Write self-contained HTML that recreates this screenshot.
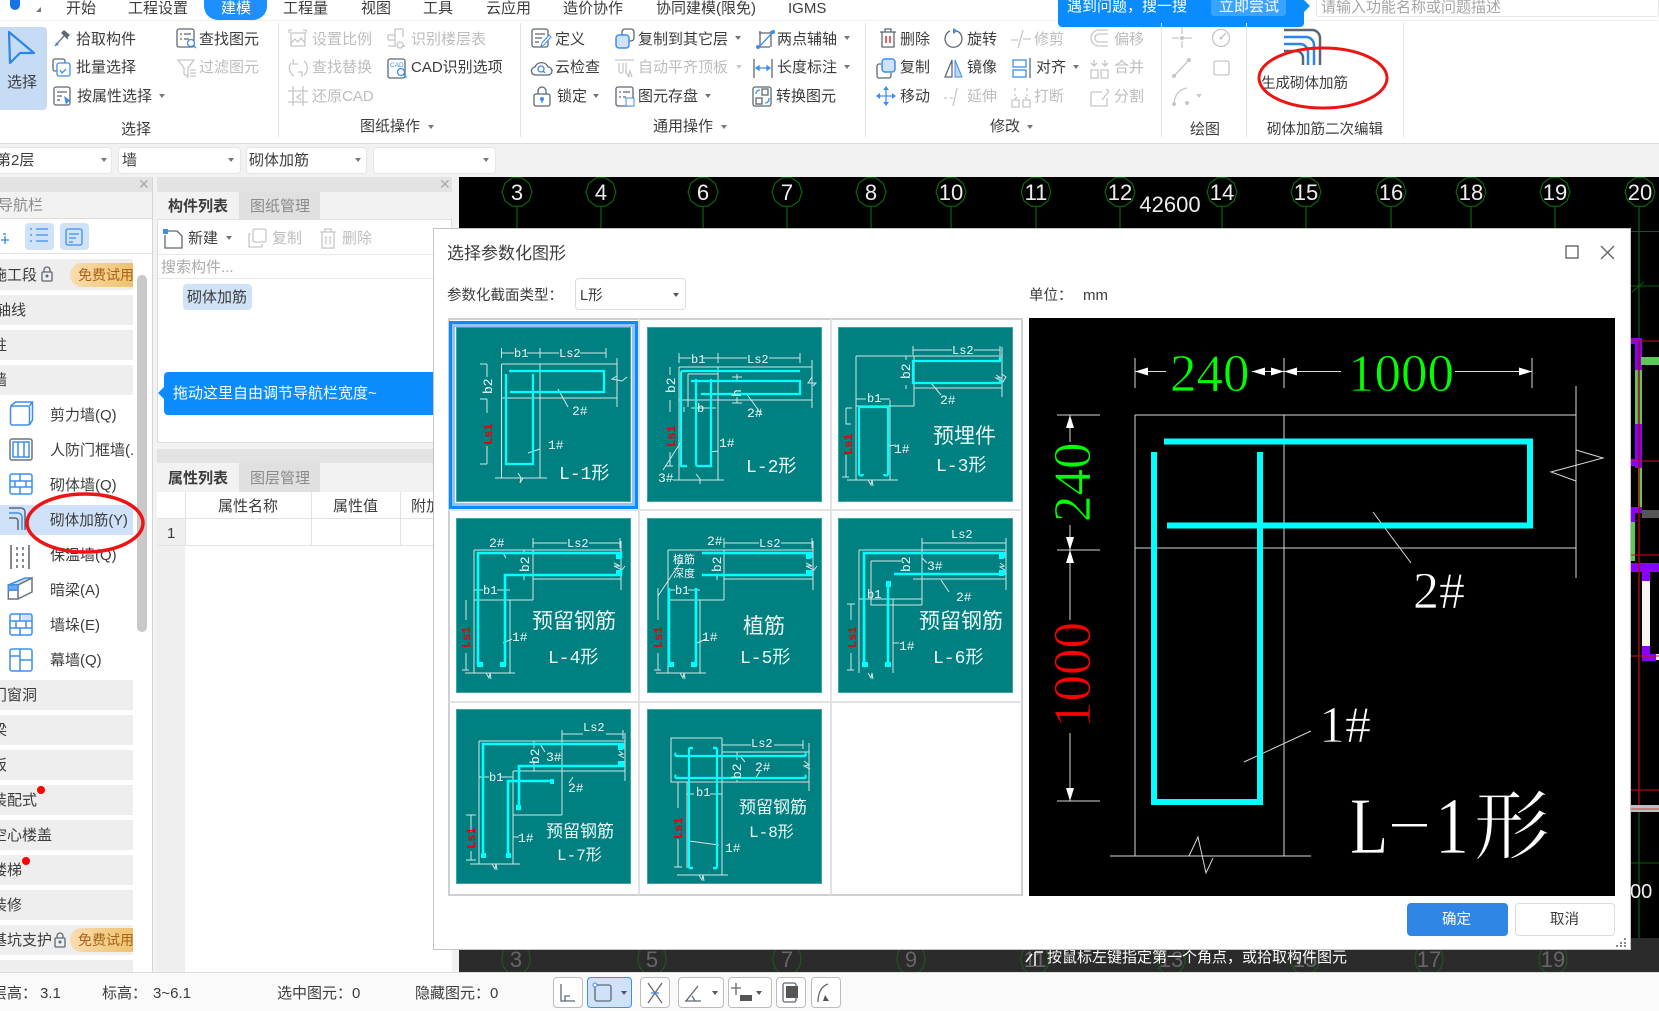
<!DOCTYPE html>
<html lang="zh"><head><meta charset="utf-8"><title>选择参数化图形</title>
<style>
html,body{margin:0;padding:0;background:#fff}
#p{position:relative;width:1659px;height:1011px;overflow:hidden;font-family:"Liberation Sans","Noto Sans CJK SC",sans-serif;font-size:15px;color:#3c3c3c;background:#f2f2f2}
.t{position:absolute;white-space:nowrap;line-height:20px;transform:translateY(calc(-50% + 1px))}
.d{color:#bdbdbd}
.b{position:absolute}
.sel{position:absolute;background:#fff;border:1px solid #e6e6e6;border-radius:4px;box-sizing:border-box;height:27px;top:147px}
.car{position:absolute;width:0;height:0;border-left:3.5px solid transparent;border-right:3.5px solid transparent;border-top:4px solid #777}
.row{position:absolute;left:0;width:133px;height:30px;background:#eeeeee}
.badge{position:absolute;left:70px;width:63px;height:24px;border-radius:12px 0 0 12px;background:linear-gradient(90deg,#f9dcb0,#eec26c);color:#a8621c;font-size:14px;line-height:25px;text-indent:8px;white-space:nowrap;overflow:hidden}
svg{position:absolute;overflow:visible}
svg text{font-family:"Liberation Mono","Noto Sans CJK SC",monospace}
.th{background:#008080;width:175px;height:175px;outline:1px solid #3aa5a5;outline-offset:-1px}
.th .w{fill:none;stroke:#d5e6e6;stroke-width:1}
.th .c{fill:none;stroke:#0ff;stroke-width:2.2}
.th text{fill:#eef7f7;font-size:12px}
.th .r{fill:#e80000;font-size:12px;font-weight:bold}
.th .n{font-size:13px}
.th .h{font-size:21px}
.th .m{font-size:18px}
.th .s{font-size:17px}
.g{fill:none;stroke:#5f6873;stroke-width:1.3}
.u{fill:none;stroke:#3d8ef0;stroke-width:1.3}
.x{fill:none;stroke:#c6c6c6;stroke-width:1.3}
.btn{position:absolute;top:977px;height:31px;box-sizing:border-box;background:#fff;border:1px solid #bcbcbc;border-radius:4px}
</style></head><body><div id="p">

<!-- top tabs -->
<div class="b" style="left:0;top:0;width:1659px;height:143px;background:#fff;border-bottom:1px solid #dcdcdc;box-sizing:content-box"></div>
<div class="b" style="left:0;top:20px;width:1659px;height:1px;background:#f0f0f0"></div>
<div class="b" style="left:10px;top:0;width:10px;height:10px;border-radius:0 0 6px 6px;background:#1673e6"></div>
<div class="b" style="left:36px;top:7px;width:0;height:0;border-left:5px solid transparent;border-bottom:5px solid #777"></div>
<div class="b" style="left:204px;top:0;width:63px;height:20px;background:#1d8fff;border-radius:0 0 14px 14px"></div>
<span class="t" style="left:66px;top:8px">开始</span>
<span class="t" style="left:128px;top:8px">工程设置</span>
<span class="t" style="left:221px;top:8px;color:#fff">建模</span>
<span class="t" style="left:283px;top:8px">工程量</span>
<span class="t" style="left:361px;top:8px">视图</span>
<span class="t" style="left:423px;top:8px">工具</span>
<span class="t" style="left:486px;top:8px">云应用</span>
<span class="t" style="left:563px;top:8px">造价协作</span>
<span class="t" style="left:656px;top:8px">协同建模(限免)</span>
<span class="t" style="left:788px;top:8px">IGMS</span>

<!-- search tip -->
<div class="b" style="left:1058px;top:0;width:246px;height:27px;background:#0a8cff;border-radius:0 0 4px 4px"></div>
<div class="b" style="left:1304px;top:0;width:0;height:0;border-left:6px solid #0a8cff;border-top:6px solid transparent;border-bottom:6px solid transparent"></div>
<span class="t" style="left:1067px;top:6px;color:#fff">遇到问题，搜一搜</span>
<div class="b" style="left:1211px;top:0;width:75px;height:16px;background:#3aa3ff;border-radius:0 0 3px 3px"></div>
<span class="t" style="left:1219px;top:6px;color:#fff">立即尝试</span>
<div class="b" style="left:1316px;top:0;width:343px;height:17px;border:1px solid #e6e6e6;border-top:0;border-radius:0 0 3px 3px;box-sizing:border-box"></div>
<span class="t" style="left:1321px;top:7px;color:#a5a5a5">请输入功能名称或问题描述</span>

<!-- ribbon -->
<div class="b" style="left:0;top:27px;width:47px;height:83px;background:#c5dcf4;border-radius:0 4px 4px 0"></div>
<span class="t" style="left:7px;top:82px">选择</span>
<span class="t" style="left:76px;top:39px">拾取构件</span>
<span class="t" style="left:76px;top:67px">批量选择</span>
<span class="t" style="left:77px;top:96px">按属性选择</span><div class="car" style="left:159px;top:94px"></div>
<span class="t" style="left:199px;top:39px">查找图元</span>
<span class="t d" style="left:199px;top:67px">过滤图元</span>
<span class="t" style="left:121px;top:129px">选择</span>
<span class="t d" style="left:312px;top:39px">设置比例</span>
<span class="t d" style="left:411px;top:39px">识别楼层表</span>
<span class="t d" style="left:312px;top:67px">查找替换</span>
<span class="t" style="left:411px;top:67px">CAD识别选项</span>
<span class="t d" style="left:312px;top:96px">还原CAD</span>
<span class="t" style="left:360px;top:126px">图纸操作</span><div class="car" style="left:428px;top:125px"></div>
<span class="t" style="left:555px;top:39px">定义</span>
<span class="t" style="left:555px;top:67px">云检查</span>
<span class="t" style="left:557px;top:96px">锁定</span><div class="car" style="left:593px;top:94px"></div>
<span class="t" style="left:638px;top:39px">复制到其它层</span><div class="car" style="left:735px;top:36px"></div>
<span class="t d" style="left:638px;top:67px">自动平齐顶板</span><div class="car" style="left:736px;top:65px;opacity:.4"></div>
<span class="t" style="left:638px;top:96px">图元存盘</span><div class="car" style="left:705px;top:94px"></div>
<span class="t" style="left:777px;top:39px">两点辅轴</span><div class="car" style="left:844px;top:36px"></div>
<span class="t" style="left:777px;top:67px">长度标注</span><div class="car" style="left:844px;top:65px"></div>
<span class="t" style="left:776px;top:96px">转换图元</span>
<span class="t" style="left:653px;top:126px">通用操作</span><div class="car" style="left:721px;top:125px"></div>
<span class="t" style="left:900px;top:39px">删除</span>
<span class="t" style="left:967px;top:39px">旋转</span>
<span class="t d" style="left:1034px;top:39px">修剪</span>
<span class="t" style="left:900px;top:67px">复制</span>
<span class="t" style="left:967px;top:67px">镜像</span>
<span class="t" style="left:1036px;top:67px">对齐</span><div class="car" style="left:1073px;top:65px"></div>
<span class="t" style="left:900px;top:96px">移动</span>
<span class="t d" style="left:967px;top:96px">延伸</span>
<span class="t d" style="left:1034px;top:96px">打断</span>
<span class="t" style="left:990px;top:126px">修改</span><div class="car" style="left:1027px;top:125px"></div>
<span class="t d" style="left:1114px;top:39px">偏移</span>
<span class="t d" style="left:1114px;top:67px">合并</span>
<span class="t d" style="left:1114px;top:96px">分割</span>
<span class="t" style="left:1190px;top:129px">绘图</span>
<span class="t" style="left:1261px;top:83px;font-size:14.5px">生成砌体加筋</span>
<span class="t" style="left:1267px;top:129px;font-size:14.5px">砌体加筋二次编辑</span>
<div class="b" style="left:278px;top:23px;width:1px;height:114px;background:#e2e2e2"></div>
<div class="b" style="left:520px;top:23px;width:1px;height:114px;background:#e2e2e2"></div>
<div class="b" style="left:865px;top:23px;width:1px;height:114px;background:#e2e2e2"></div>
<div class="b" style="left:1161px;top:23px;width:1px;height:114px;background:#e2e2e2"></div>
<div class="b" style="left:1246px;top:23px;width:1px;height:114px;background:#e2e2e2"></div>
<div class="b" style="left:1403px;top:23px;width:1px;height:114px;background:#e2e2e2"></div>

<svg style="left:0;top:0" width="1659" height="150" viewBox="0 0 1659 150">
<path d="M9 32L34 53H20L10 63Z" fill="#c5dcf4" stroke="#2b86e8" stroke-width="2.2" stroke-linejoin="round"/>
<g transform="translate(53,28)"><path class="g" d="M2 18L11 8M9 5l6 6" stroke-width="2"/><path d="M11 2l6 5-3 3-6-5z" fill="#5f6873"/><path d="M2 18l1-4 3 3z" fill="#3d8ef0"/></g>
<g transform="translate(52,58)"><rect class="g" x="1" y="1" width="12" height="12" rx="2"/><rect class="u" x="5" y="5" width="13" height="13" rx="2" style="fill:#fff"/><path class="u" d="M8 12l2 3 4-4"/></g>
<g transform="translate(53,86)"><rect class="g" x="1" y="1" width="16" height="18" rx="2"/><path class="g" d="M4 6h10M4 10h5M4 14h3"/><path d="M11 10l7 5-3 1-2 3z" fill="#3d8ef0"/></g>
<g transform="translate(176,28)"><rect class="g" x="1" y="1" width="17" height="18" rx="2"/><path class="g" d="M4 6h2M8 6h7M4 11h2M8 11h5"/><circle class="u" cx="15" cy="15" r="3.5" style="fill:#fff"/><path class="u" d="M18 18l2 2"/></g>
<g transform="translate(177,58)"><path class="x" d="M1 2h16l-6 8v9l-4-3v-6zM13 12h6M13 15h6M13 18h6"/></g>
<g transform="translate(288,28)"><path class="x" d="M1 5V2h3M15 2h3v3M3 5h14v13H3zM3 15l4-4 3 3 3-4 4 5"/></g>
<g transform="translate(387,28)"><path class="x" d="M1 12V7h7V1h8v8M8 7v12M1 12h7M1 18h7V12M13 14a3 3 0 1 0 .1 0M16 17l2 2"/></g>
<g transform="translate(288,58)"><path class="x" d="M3 5a9 9 0 0 0 3 13M16 3a9 9 0 0 1 0 14M5 1l0 5 5 0M14 19l0-5-4 0" stroke-width="1.6"/></g>
<g transform="translate(387,58)"><rect class="g" x="1" y="1" width="17" height="19" rx="2"/><text x="3" y="9" font-size="6.5" fill="#3d8ef0" style="font-family:'Liberation Sans'">CAD</text><circle class="u" cx="14" cy="14" r="3.5" style="fill:#fff"/><path class="u" d="M16.500 16.500l3 3"/></g>
<g transform="translate(288,86)"><path class="x" d="M5 0v20M15 0v20M0 5h20M0 16h20M13 8l-4 3 4 3" stroke-width="1.4"/></g>
<g transform="translate(531,28)"><rect class="g" x="1" y="1" width="16" height="18" rx="2"/><path class="g" d="M4 6h10M4 10h7M4 14h4"/><path d="M18 7l2 2-7 8-3 1 1-3z" fill="#fff" stroke="#3d8ef0"/></g>
<g transform="translate(531,58)"><path class="g" d="M5 17a4 4 0 0 1-1-8 7 7 0 0 1 13 0 4 4 0 0 1 0 8z"/><circle class="u" cx="10" cy="11" r="3"/><path class="u" d="M12 13l2 2"/></g>
<g transform="translate(533,86)"><rect class="g" x="1" y="8" width="16" height="12" rx="2"/><path class="g" d="M5 8V5a4 4 0 0 1 8 0v3"/><circle cx="9" cy="13" r="2" fill="#3d8ef0"/><path class="u" d="M9 13v4"/></g>
<g transform="translate(615,28)"><rect class="g" x="7" y="1" width="12" height="12" rx="3" style="fill:#fff"/><rect x="1" y="7" width="13" height="13" rx="3" fill="#cfe2fa" stroke="#3d8ef0" stroke-width="1.5"/></g>
<g transform="translate(615,58)"><path class="x" d="M0 2h19M4 5v8a2 2 0 0 0 4 0V5M11 5v10l4 4M17 19l-2-6-2 6"/></g>
<g transform="translate(615,86)"><rect class="g" x="1" y="1" width="17" height="19" rx="2"/><path class="g" d="M4 6h2M8 6h7M4 11h2M8 11h3"/><rect x="11" y="12" width="8" height="8" fill="#fff" stroke="#3d8ef0"/></g>
<g transform="translate(755,28)"><path class="g" d="M4 5h14v0M2 19h13M5 3v15M16 3v16"/><path class="u" d="M3 20L19 3" stroke-width="2"/><circle cx="3" cy="19" r="2" fill="#3d8ef0"/><circle cx="18" cy="4" r="2" fill="#3d8ef0"/></g>
<g transform="translate(753,58)"><path class="g" d="M1 1v19M19 1v19"/><path class="u" d="M3 10h14M3 10l3-2v4zM17 10l-3-2v4z"/></g>
<g transform="translate(752,86)"><rect class="g" x="1" y="1" width="18" height="19" rx="2"/><rect class="g" x="10" y="3" width="6" height="6"/><rect class="g" x="4" y="12" width="6" height="6"/><path class="u" d="M4 8c0-3 2-4 4-4M13 17c3 0 4-2 4-5"/></g>
<g transform="translate(878,28)"><path class="g" d="M2 4h16M7 4V1h6v3M4 4v15h12V4"/><path d="M8 8v7M12 8v7" stroke="#e03030" stroke-width="1.5"/></g>
<g transform="translate(944,28)"><path class="g" d="M13 3a8.500 8.500 0 1 1-7 0" stroke-width="1.500"/><path d="M9 0l5 3-5 3z" fill="#3d8ef0"/></g>
<g transform="translate(1011,28)"><path class="x" d="M0 12h7M12 11h8M12 2L7 20"/></g>
<g transform="translate(876,58)"><rect x="6" y="1" width="13" height="13" rx="3" fill="#cfe2fa" stroke="#3d8ef0" stroke-width="1.500"/><path class="g" d="M5 6H3a2 2 0 0 0-2 2v10a2 2 0 0 0 2 2h10a2 2 0 0 0 2-2v-3"/></g>
<g transform="translate(944,58)"><path class="g" d="M8 2L1 19h7z"/><path d="M11 2l7 17h-7z" fill="#bcd8f8" stroke="#3d8ef0"/></g>
<g transform="translate(1012,58)"><rect class="u" x="1" y="2" width="13" height="7" stroke-width="1.500"/><rect class="u" x="1" y="12" width="13" height="7" stroke-width="1.500"/><path class="g" d="M18 0v20"/></g>
<g transform="translate(876,86)"><path class="u" d="M10 3v14M3 10h14"/><path d="M10 0l3 4h-6zM10 20l3-4h-6zM0 10l4-3v6zM20 10l-4-3v6z" fill="#3d8ef0"/></g>
<g transform="translate(944,86)"><path class="x" d="M0 12h3M6 12h3M13 2l-4 18"/></g>
<g transform="translate(1011,86)"><path class="x" d="M1 14h7v7H1zM12 14h7v7h-7zM4 10V8M4 5V2M16 10V8M16 5V2M6 11l-2 2M14 11l2 2"/></g>
<g transform="translate(1090,28)"><path class="x" d="M18 2H9a8 8 0 0 0 0 16h9M18 6H9a4 4 0 0 0 0 8h9" stroke-width="1.500"/></g>
<g transform="translate(1090,58)"><path class="x" d="M1 12h7v8H1zM11 12h7v8h-7zM4 2v5M1 5l3 3 3-3M15 2v5M12 5l3 3 3-3"/></g>
<g transform="translate(1090,86)"><path class="x" d="M1 6h11M1 6v14h16V12M12 14l7-9M16 3l3 2" stroke-width="1.500"/></g>
<g transform="translate(1172,26)"><path class="x" d="M0 12h7M12 12h8M10 1v7M10 15v7"/><circle cx="10" cy="12" r="2" fill="#c6c6c6"/></g>
<g transform="translate(1212,28)"><circle class="x" cx="9" cy="10" r="8.500" stroke-width="1.500"/><path class="x" d="M9 10l5-5"/><circle cx="9" cy="10" r="1.500" fill="#c6c6c6"/></g>
<g transform="translate(1172,58)"><path class="x" d="M2 18L17 2" stroke-width="1.500"/><circle cx="2" cy="18" r="2" fill="#c6c6c6"/><circle cx="17" cy="2" r="2" fill="#c6c6c6"/></g>
<g transform="translate(1213,60)"><rect class="x" x="1" y="1" width="15" height="14" rx="2" stroke-width="1.500"/></g>
<g transform="translate(1172,86)"><path class="x" d="M2 17C3 8 8 3 15 2" stroke-width="1.500"/><circle cx="2" cy="18" r="2" fill="#c6c6c6"/><circle cx="15" cy="17" r="2" fill="#c6c6c6"/></g>
<path d="M1196 94l6 0-3 4z" fill="#ccc"/>
<g fill="none" stroke-width="2.500"><path d="M1284 30h28a8 8 0 0 1 8 8v27" stroke="#5a6674"/><path d="M1284 37h22a8 8 0 0 1 8 8v20" stroke="#2b86e8"/><path d="M1284 44h16a8 8 0 0 1 8 8v13" stroke="#2b86e8"/><path d="M1284 51h12a7 7 0 0 1 7 7v7" stroke="#5a6674"/></g>
</svg>

<!-- toolbar -->
<div class="sel" style="left:-2px;width:114px"></div><span class="t" style="left:-4px;top:160px">第2层</span><div class="car" style="left:101px;top:158px"></div>
<div class="sel" style="left:118px;width:123px"></div><span class="t" style="left:122px;top:160px">墙</span><div class="car" style="left:228px;top:158px"></div>
<div class="sel" style="left:246px;width:121px"></div><span class="t" style="left:249px;top:160px">砌体加筋</span><div class="car" style="left:355px;top:158px"></div>
<div class="sel" style="left:373px;width:123px"></div><div class="car" style="left:483px;top:158px"></div>

<!-- left nav -->
<div class="b" style="left:0;top:177px;width:152px;height:795px;background:#fff;border-right:1px solid #d5d5d5"></div>
<div class="b" style="left:0;top:177px;width:152px;height:15px;background:#e3e3e3"></div>
<span class="t" style="left:138px;top:183px;color:#aaa;font-size:14px">✕</span>
<div class="b" style="left:0;top:192px;width:152px;height:26px;background:#f2f2f2;border-bottom:1px solid #dcdcdc"></div>
<span class="t" style="left:-2px;top:205px;color:#8c8c8c">导航栏</span>
<div class="b" style="left:25px;top:223px;width:29px;height:27px;background:#cfe2f6;border-radius:4px"></div>
<div class="b" style="left:60px;top:223px;width:29px;height:27px;background:#cfe2f6;border-radius:4px"></div>
<div class="b" style="left:0;top:253px;width:152px;height:1px;background:#e2e2e2"></div>
<svg style="left:0;top:220px" width="100" height="36"><path class="u" d="M1 20h8M5 16v8M3 14h3" stroke-width="1.400" style="stroke:#2b86e8"/><path class="u" d="M30 9h2M36 9h12M30 15h2M36 15h12M30 21h2M36 21h12" stroke-width="1.500"/><rect class="u" x="66" y="9" width="16" height="16" rx="2"/><path class="u" d="M69 14h10M69 18h7M69 22h4"/></svg>

<div class="row" style="top:259px;height:31px"></div><span class="t" style="left:-8px;top:275px">施工段</span><div class="badge" style="top:263px">免费试用</div>
<svg style="left:41px;top:266px" width="12" height="16"><rect class="g" x="1" y="6" width="10" height="9" rx="1"/><path class="g" d="M3 6V4a3 3 0 0 1 6 0v2"/><circle cx="6" cy="10" r="1.500" fill="#5f6873"/></svg>
<div class="row" style="top:295px"></div><span class="t" style="left:-4px;top:310px">轴线</span>
<div class="row" style="top:330px"></div><span class="t" style="left:-8px;top:345px">柱</span>
<div class="row" style="top:365px"></div><span class="t" style="left:-8px;top:380px">墙</span>
<div class="b" style="left:0;top:505px;width:133px;height:30px;background:#cfe2fa"></div>
<span class="t" style="left:50px;top:415px">剪力墙(Q)</span>
<span class="t" style="left:50px;top:450px;width:84px;overflow:hidden">人防门框墙(...</span>
<span class="t" style="left:50px;top:485px">砌体墙(Q)</span>
<span class="t" style="left:50px;top:520px;font-size:14.6px">砌体加筋(Y)</span>
<span class="t" style="left:50px;top:555px">保温墙(Q)</span>
<span class="t" style="left:50px;top:590px">暗梁(A)</span>
<span class="t" style="left:50px;top:625px">墙垛(E)</span>
<span class="t" style="left:50px;top:660px">幕墙(Q)</span>
<svg style="left:8px;top:400px" width="26" height="280" viewBox="0 0 26 280">
<g fill="none" stroke="#3d8ef0" stroke-width="1.500">
<rect x="2.500" y="6" width="19" height="19" rx="2"/><path d="M2.500 6l5-4h17v18l-3 5M21.500 6l3-4"/>
<rect x="2" y="39" width="22" height="21" rx="2" stroke="#6a7480"/><rect x="5" y="42" width="16" height="15"/><path d="M10 42v15M16 42v15"/>
<rect x="2" y="74" width="22" height="20" rx="2"/><path d="M2 81h22M2 87h22M12 74v7M7 81v6M18 81v6M12 87v7"/>
<path d="M1 108h12a4 4 0 0 1 4 4v18" stroke="#5a6674"/><path d="M1 113h9a4 4 0 0 1 4 4v13"/><path d="M1 118h6a3 3 0 0 1 3 3v9" stroke="#5a6674"/>
<path d="M3 145v24M21 145v24" stroke="#5a6674"/><path d="M9 147v22M15 147v22" stroke-dasharray="3 3" stroke="#5a6674"/>
<path d="M.3 185L17 178H24L10 185Z" fill="#cfe2fa"/><path d="M.3 185H10V199H.3ZM.3 190H10" stroke="#6a7480"/><rect x=".3" y="185" width="9.700" height="5" fill="#6fa8ee" stroke="#3d8ef0"/><path d="M10 185L24 178V192L10 199" stroke="#6a7480"/>
<rect x="2" y="214" width="22" height="21" rx="2"/><path d="M2 221h22M2 228h22M12 214v7M8 221v7M18 221v7M12 228v7"/><rect x="14" y="215" width="9" height="5" fill="#cfe2fa" stroke="none"/>
<rect x="2" y="249" width="22" height="22" rx="2"/><path d="M12 249v22M12 260h12M2 256h10"/>
</g></svg>

<div class="row" style="top:680px"></div><span class="t" style="left:-8px;top:695px">门窗洞</span>
<div class="row" style="top:715px"></div><span class="t" style="left:-8px;top:730px">梁</span>
<div class="row" style="top:750px"></div><span class="t" style="left:-8px;top:765px">板</span>
<div class="row" style="top:785px"></div><span class="t" style="left:-8px;top:800px">装配式</span>
<div class="row" style="top:820px"></div><span class="t" style="left:-8px;top:835px">空心楼盖</span>
<div class="row" style="top:855px"></div><span class="t" style="left:-8px;top:870px">楼梯</span>
<div class="row" style="top:890px"></div><span class="t" style="left:-8px;top:905px">装修</span>
<div class="row" style="top:925px"></div><span class="t" style="left:-8px;top:940px">基坑支护</span><div class="badge" style="top:928px">免费试用</div>
<svg style="left:54px;top:932px" width="12" height="16"><rect class="g" x="1" y="6" width="10" height="9" rx="1"/><path class="g" d="M3 6V4a3 3 0 0 1 6 0v2"/><circle cx="6" cy="10" r="1.500" fill="#5f6873"/></svg>
<div class="row" style="top:960px;height:12px"></div>
<div class="b" style="left:37px;top:786px;width:8px;height:8px;border-radius:50%;background:#f00"></div>
<div class="b" style="left:22px;top:857px;width:8px;height:8px;border-radius:50%;background:#f00"></div>
<div class="b" style="left:137px;top:275px;width:10px;height:357px;background:#c9c9c9;border-radius:5px"></div>

<!-- middle panel -->
<div class="b" style="left:157px;top:177px;width:295px;height:266px;background:#fff;border:1px solid #dedede;border-top:0;box-sizing:border-box"></div>
<div class="b" style="left:157px;top:177px;width:295px;height:15px;background:#e3e3e3"></div>
<span class="t" style="left:439px;top:183px;color:#aaa;font-size:14px">✕</span>
<div class="b" style="left:157px;top:192px;width:295px;height:28px;background:#f2f2f2;border-bottom:1px solid #e2e2e2;box-sizing:border-box"></div>
<div class="b" style="left:239px;top:192px;width:81px;height:28px;background:#e0e0e0"></div>
<span class="t" style="left:168px;top:206px;font-weight:bold">构件列表</span>
<span class="t" style="left:250px;top:206px;color:#8a8a8a">图纸管理</span>
<span class="t" style="left:188px;top:238px">新建</span><div class="car" style="left:226px;top:236px"></div>
<span class="t d" style="left:272px;top:238px">复制</span>
<span class="t d" style="left:342px;top:238px">删除</span>
<svg style="left:160px;top:226px" width="190" height="24"><path class="g" d="M5 5h12l5 5v12H5V9" stroke-width="1.500"/><rect x="3" y="3" width="5" height="5" fill="#3d8ef0"/><rect class="x" x="93" y="3" width="13" height="13" rx="2"/><path class="x" d="M91 8h-2v13h13v-3"/><path class="x" d="M160 6h16M165 6V3h6v3M162 6v16h12V6M166 10v8M170 10v8"/></svg>
<div class="b" style="left:158px;top:254px;width:293px;height:1px;background:#e8e8e8"></div>
<div class="b" style="left:158px;top:278px;width:293px;height:1px;background:#e8e8e8"></div>
<span class="t" style="left:161px;top:267px;color:#aaa">搜索构件...</span>
<div class="b" style="left:183px;top:284px;width:69px;height:26px;background:#cfe2f6;border-radius:4px"></div>
<span class="t" style="left:187px;top:297px">砌体加筋</span>
<div class="b" style="left:164px;top:372px;width:290px;height:43px;background:#0a8cff;border-radius:4px"></div>
<div class="b" style="left:158px;top:387px;width:0;height:0;border-right:6px solid #0a8cff;border-top:6px solid transparent;border-bottom:6px solid transparent"></div>
<span class="t" style="left:173px;top:393px;color:#fff">拖动这里自由调节导航栏宽度~</span>

<div class="b" style="left:157px;top:449px;width:295px;height:14px;background:#e3e3e3"></div>
<div class="b" style="left:157px;top:463px;width:295px;height:29px;background:#f2f2f2"></div>
<div class="b" style="left:239px;top:463px;width:81px;height:29px;background:#e0e0e0"></div>
<span class="t" style="left:168px;top:478px;font-weight:bold">属性列表</span>
<span class="t" style="left:250px;top:478px;color:#8a8a8a">图层管理</span>
<div class="b" style="left:157px;top:492px;width:295px;height:480px;background:#fff"></div>
<div class="b" style="left:157px;top:492px;width:28px;height:480px;background:#efefef"></div>
<div class="b" style="left:157px;top:492px;width:28px;height:26px;background:#fff"></div>
<div class="b" style="left:157px;top:518px;width:295px;height:1px;background:#e2e2e2"></div>
<div class="b" style="left:157px;top:545px;width:295px;height:1px;background:#e2e2e2"></div>
<div class="b" style="left:185px;top:492px;width:1px;height:54px;background:#e2e2e2"></div>
<div class="b" style="left:311px;top:492px;width:1px;height:54px;background:#e2e2e2"></div>
<div class="b" style="left:400px;top:492px;width:1px;height:54px;background:#e2e2e2"></div>
<span class="t" style="left:218px;top:506px">属性名称</span>
<span class="t" style="left:333px;top:506px">属性值</span>
<span class="t" style="left:411px;top:506px">附加</span>
<span class="t" style="left:167px;top:533px">1</span>

<!-- canvas -->
<div class="b" style="left:459px;top:177px;width:1200px;height:795px;background:#000"></div>
<svg style="left:459px;top:177px" width="1200" height="795" viewBox="459 177 1200 795">
<defs><polygon id="o" points="15,0 12.100,8.800 4.600,14.300 -4.600,14.300 -12.100,8.800 -15,0 -12.100,-8.800 -4.600,-14.300 4.600,-14.300 12.100,-8.800" fill="none" stroke="#0c7a0c"/></defs>
<g stroke="#0c7a0c"><path d="M517 207v21M601 207v21M703 207v21M787 207v21M871 207v21M951 207v21M1036 207v21M1120 207v21M1222 207v21M1306 207v21M1391 207v21M1471 207v21M1555 207v21M1639 207v760"/><path d="M1631 231.500h28M1631 286h28M1631 863h28M1632 292l12-10" stroke="#0a5f0a"/></g>
<g transform="translate(517,192)"><use href="#o"/></g><g transform="translate(601,192)"><use href="#o"/></g><g transform="translate(703,192)"><use href="#o"/></g><g transform="translate(787,192)"><use href="#o"/></g><g transform="translate(871,192)"><use href="#o"/></g><g transform="translate(951,192)"><use href="#o"/></g><g transform="translate(1036,192)"><use href="#o"/></g><g transform="translate(1120,192)"><use href="#o"/></g><g transform="translate(1222,192)"><use href="#o"/></g><g transform="translate(1306,192)"><use href="#o"/></g><g transform="translate(1391,192)"><use href="#o"/></g><g transform="translate(1471,192)"><use href="#o"/></g><g transform="translate(1555,192)"><use href="#o"/></g><g transform="translate(1640,192)"><use href="#o"/></g>
<g fill="#eee" font-size="22" text-anchor="middle">
<text style="font-family:'Liberation Sans'" x="517" y="200">3</text><text style="font-family:'Liberation Sans'" x="601" y="200">4</text><text style="font-family:'Liberation Sans'" x="703" y="200">6</text><text style="font-family:'Liberation Sans'" x="787" y="200">7</text><text style="font-family:'Liberation Sans'" x="871" y="200">8</text><text style="font-family:'Liberation Sans'" x="951" y="200">10</text><text style="font-family:'Liberation Sans'" x="1036" y="200">11</text><text style="font-family:'Liberation Sans'" x="1120" y="200">12</text><text style="font-family:'Liberation Sans'" x="1222" y="200">14</text><text style="font-family:'Liberation Sans'" x="1306" y="200">15</text><text style="font-family:'Liberation Sans'" x="1391" y="200">16</text><text style="font-family:'Liberation Sans'" x="1471" y="200">18</text><text style="font-family:'Liberation Sans'" x="1555" y="200">19</text><text style="font-family:'Liberation Sans'" x="1640" y="200">20</text>
<text style="font-family:'Liberation Sans'" x="1170" y="212" font-size="22">42600</text>
</g>
<!-- right side structure -->
<rect x="1630" y="338" width="12" height="6" fill="#8a00ff"/><rect x="1635" y="338" width="7" height="32" fill="#8a00ff"/>
<rect x="1635" y="370" width="7" height="55" fill="#5cc85c"/><rect x="1637.500" y="370" width="2" height="55" fill="#777"/>
<rect x="1641" y="357" width="18" height="8" fill="#5cc85c"/>
<rect x="1635" y="424" width="7" height="44" fill="#8a00ff"/><rect x="1630" y="459" width="12" height="7" fill="#8a00ff"/>
<rect x="1638" y="468" width="4" height="39" fill="#5cc85c"/>
<rect x="1630" y="507" width="12" height="6" fill="#8a00ff"/><rect x="1630" y="511" width="5" height="11" fill="#8a00ff"/><rect x="1635" y="507" width="7" height="5" fill="#8a00ff"/>
<rect x="1642" y="510" width="17" height="8" fill="#555"/>
<rect x="1630" y="522" width="5" height="39" fill="#5cc85c"/>
<rect x="1630" y="563" width="29" height="9" fill="#8a00ff"/><rect x="1642" y="572" width="8" height="9" fill="#8a00ff"/>
<rect x="1642" y="581" width="8" height="65" fill="#f5f5f5"/>
<rect x="1642" y="646" width="8" height="15" fill="#8a00ff"/><rect x="1642" y="654" width="14" height="7" fill="#8a00ff"/><rect x="1656" y="654" width="3" height="6" fill="#f5f5f5"/>
<path d="M1631 341h28M1631 461h28M1631 555h28M1631 656h28M1631 790h28" stroke="#d01010" fill="none"/>
<path d="M1639 341v468" stroke="#a80808" stroke-width="1.500" fill="none"/>
<rect x="1631" y="805" width="28" height="7" fill="#b9c2c8"/><path d="M1631 809h28" stroke="#f03030"/>
<text x="1630" y="898" fill="#eee" font-size="20" style="font-family:'Liberation Sans'">00</text>
<rect x="459" y="938" width="1200" height="34" fill="#2b2b2b"/>
<g fill="none" stroke="#1f5a1f"><ellipse cx="516" cy="959" rx="14" ry="16"/><ellipse cx="652" cy="959" rx="14" ry="16"/><ellipse cx="787" cy="959" rx="14" ry="16"/><ellipse cx="911" cy="959" rx="14" ry="16"/><ellipse cx="1035" cy="959" rx="14" ry="16"/><ellipse cx="1171" cy="959" rx="14" ry="16"/><ellipse cx="1305" cy="959" rx="14" ry="16"/><ellipse cx="1429" cy="959" rx="14" ry="16"/><ellipse cx="1553" cy="959" rx="14" ry="16"/></g>
<g fill="#666" font-size="22" text-anchor="middle"><text style="font-family:'Liberation Sans'" x="516" y="967">3</text><text style="font-family:'Liberation Sans'" x="652" y="967">5</text><text style="font-family:'Liberation Sans'" x="787" y="967">7</text><text style="font-family:'Liberation Sans'" x="911" y="967">9</text><text style="font-family:'Liberation Sans'" x="1035" y="967">11</text><text style="font-family:'Liberation Sans'" x="1171" y="967">13</text><text style="font-family:'Liberation Sans'" x="1305" y="967">15</text><text style="font-family:'Liberation Sans'" x="1429" y="967">17</text><text style="font-family:'Liberation Sans'" x="1553" y="967">19</text></g>
<path d="M1026 962l6-8M1035 952h8M1035 952v14" stroke="#fff" stroke-width="1.500" fill="none"/>
</svg>
<span class="t" style="left:1047px;top:957px;color:#fff;font-size:15px">按鼠标左键指定第一个角点，或拾取构件图元</span>

<!-- status -->
<div class="b" style="left:0;top:972px;width:1659px;height:39px;background:#fafafa;border-top:1px solid #dcdcdc;box-sizing:border-box"></div>
<span class="t" style="left:-8px;top:993px">层高：</span><span class="t" style="left:40px;top:993px">3.1</span>
<span class="t" style="left:102px;top:993px">标高：</span><span class="t" style="left:153px;top:993px">3~6.1</span>
<span class="t" style="left:277px;top:993px">选中图元：0</span>
<span class="t" style="left:415px;top:993px">隐藏图元：0</span>
<div class="btn" style="left:553px;width:30px"></div>
<div class="btn" style="left:587px;width:45px;background:#cfe2fa;border-color:#3d8ef0"></div>
<div class="btn" style="left:640px;width:30px"></div>
<div class="btn" style="left:678px;width:46px"></div>
<div class="btn" style="left:728px;width:44px"></div>
<div class="btn" style="left:776px;width:30px"></div>
<div class="btn" style="left:811px;width:30px"></div>
<svg style="left:553px;top:977px" width="290" height="31"><path class="g" d="M8 7v17h14M12 24v-5h5"/><rect class="g" x="42" y="8" width="16" height="16" rx="2"/><circle cx="42" cy="8" r="2" fill="#fff" stroke="#3d8ef0"/><path d="M68 14h6l-3 4z" fill="#555"/><path class="g" d="M95 6l14 20M109 6L95 26"/><path class="u" d="M98 16h8"/><path class="g" d="M132 24h16M133 24l12-15M139 19l3 5"/><path d="M159 14h6l-3 4z" fill="#555"/><path class="g" d="M183 6v12M178 11h10"/><rect x="187" y="18" width="12" height="6" fill="#555"/><path d="M203 14h6l-3 4z" fill="#555"/><rect class="g" x="230" y="6" width="13" height="19" rx="2"/><rect x="233" y="9" width="12" height="12" fill="#555"/><path class="g" d="M265 25c0-10 4-16 10-18"/><path d="M272 18l4 6h-6z" fill="#555"/></svg>

<!-- dialog -->
<div class="b" style="left:433px;top:228px;width:1198px;height:722px;background:#fff;border:1px solid #c4c4c4;box-sizing:border-box"></div>
<span class="t" style="left:447px;top:253px;font-size:17px">选择参数化图形</span>
<svg style="left:1560px;top:240px" width="60" height="24"><rect x="6" y="6" width="12" height="12" fill="none" stroke="#666" stroke-width="1.400"/><path d="M41 6l13 13M54 6L41 19" stroke="#666" stroke-width="1.400"/></svg>
<span class="t" style="left:447px;top:295px;font-size:14.500px">参数化截面类型：</span>
<div class="b" style="left:575px;top:278px;width:111px;height:32px;border:1px solid #dcdcdc;border-radius:4px;box-sizing:border-box"></div>
<span class="t" style="left:580px;top:295px;font-size:14.500px">L形</span><div class="car" style="left:673px;top:293px;border-top-color:#555"></div>
<span class="t" style="left:1029px;top:295px;font-size:14.500px">单位：</span><span class="t" style="left:1083px;top:295px;font-size:15px">mm</span>

<div class="b" style="left:448px;top:318px;width:575px;height:578px;border:2px solid #cfcfcf;box-sizing:border-box"></div>
<div class="b" style="left:638px;top:319px;width:2px;height:576px;background:#e2e2e2"></div>
<div class="b" style="left:830px;top:319px;width:2px;height:576px;background:#e2e2e2"></div>
<div class="b" style="left:449px;top:509px;width:573px;height:2px;background:#e2e2e2"></div>
<div class="b" style="left:449px;top:701px;width:573px;height:2px;background:#e2e2e2"></div>
<div class="b" style="left:449px;top:321px;width:189px;height:188px;box-sizing:border-box;border:3px solid #0a8cff;box-shadow:inset 0 0 0 3px #93c2fb"></div>

<!-- L-1 -->
<svg class="th" style="left:456px;top:327px" width="175" height="175" viewBox="0 0 175 175">
<path class="w" d="M45.500 21v10M84 21v10M150 21v10M46 26h12M71 26h32M124 26h26M45.500 37H161M45.500 37V151M84 37V151M45.500 71H161M161 31v49M39 151h52M31 37h-7M31 37v13M31 60v2M31 72h-7M31 72v14M31 119v18M24 137h7M161 49l-5 3 10 2 5-4M62 146l3 5-1 5 3-5M102 62l10 18M72 126l12-4"/>
<path class="c" d="M53 44H148V65H54M50 47V137H77V47"/>
<text x="58" y="30">b1</text><text x="103" y="30">Ls2</text>
<text class="n" transform="rotate(-90 36 67)" x="36" y="67">b2</text><text class="r" transform="rotate(-90 36 118)" x="36" y="118">Ls1</text>
<text class="n" x="116" y="88">2#</text><text class="n" x="92" y="122">1#</text>
<text class="m" x="103" y="152">L-1形</text>
</svg>
<!-- L-2 -->
<svg class="th" style="left:647px;top:327px" width="175" height="175" viewBox="0 0 175 175">
<path class="w" d="M32 26v10M71 26v10M153 26v10M32 31h12M56 31h44M122 31h31M32 40H165M32 40V153M71 40V153M32 73H165M165 33v48M26 153h51M23 40v8M23 73v12M23 125v14M18 139h8M41 47H71M41 47V80M37 85V80M44 81h25M90 47v8M85 50h10M90 70v6M85 76h10M165 50l-4 6 8 0-3 3M49 147l4 5v5M99 66l16 22M63 125l8-1M16 143l18-28"/>
<path class="c" d="M153 44H36a2 2 0 0 0-2 2V139h6M44 54H153V67H54M49 52V137a2 2 0 0 0 2 2H64V52"/>
<text x="44" y="36">b1</text><text x="100" y="36">Ls2</text><text x="50" y="85">b</text>
<text class="n" transform="rotate(-90 94 70)" x="94" y="70">h</text>
<text class="n" transform="rotate(-90 28 66)" x="28" y="66">b2</text><text class="r" transform="rotate(-90 28 120)" x="28" y="120">Ls1</text>
<text class="n" x="100" y="90">2#</text><text class="n" x="72" y="120">1#</text><text class="n" x="11" y="155">3#</text>
<text class="m" x="99" y="145">L-2形</text>
</svg>
<!-- L-3 -->
<svg class="th" style="left:838px;top:327px" width="175" height="175" viewBox="0 0 175 175">
<path class="w" d="M75 19v9M162 19v9M75 23h39M136 23h26M18 29H164M18 29V153M76 29V79M18 79H76M52 73V153M76 61H164M164 20v50M9 153h51M68 29v4M68 58v4M18 72h10M42 72h10M8 81v16H13M8 81h6M8 128v22M4 150h7M158 48l5 3-5 0 7 4 3-5-4-3M30 153l3 5 1-5 1 6M93 56l10 12M50 119l8-1"/>
<path class="c" d="M162 30v4H75V56H162V52M21 147V80H50V147M21 147c0 2 4 2 4 0M50 147c0 2-4 2-4 0"/>
<text class="n" transform="rotate(-90 72 52)" x="72" y="52">b2</text><text x="29" y="75">b1</text><text x="114" y="27">Ls2</text>
<text class="r" transform="rotate(-90 14 128)" x="14" y="128">Ls1</text>
<text class="n" x="102" y="77">2#</text><text class="n" x="56" y="126">1#</text>
<text class="h" x="95" y="116">预埋件</text><text class="m" x="98" y="144">L-3形</text>
</svg>
<!-- L-4 -->
<svg class="th" style="left:456px;top:518px" width="175" height="175" viewBox="0 0 175 175">
<path class="w" d="M77 20v10M164 20v10M77 25h34M133 25h31M18 32H165M18 32V155M77 32V82M18 82H77M54 82V155M77 61H165M165 23v49M9 155h50M68 32v3M68 58v4M18 72h9M41 72h13M10 82v20M10 135v17M6 152h7M158 45l6 3-6 0 8 4 3-4M30 155l3 5 1-5 1 6M47 35l3 5M47 125l9-4"/>
<path class="c" d="M165 40v-5H22V147M165 52v5H49V147" style="stroke-width:2.600"/>
<path d="M21 144h6v5h-6zM44 144h6v5h-6zM160 35h5v6h-5zM160 52h5v6h-5z" fill="#0ff"/>
<text class="n" x="33" y="29">2#</text><text x="111" y="29">Ls2</text>
<text class="n" transform="rotate(-90 73 54)" x="73" y="54">b2</text><text x="27" y="76">b1</text>
<text class="r" transform="rotate(-90 14 130)" x="14" y="130">Ls1</text><text class="n" x="56" y="123">1#</text>
<text class="h" x="76" y="110">预留钢筋</text><text class="m" x="92" y="145">L-4形</text>
</svg>
<!-- L-5 -->
<svg class="th" style="left:647px;top:518px" width="175" height="175" viewBox="0 0 175 175">
<path class="w" d="M77 20v10M165 20v10M77 25h35M134 25h31M21 32H166M21 32V155M77 32V82M21 82H77M53 82V155M77 61H166M166 23v49M9 155h50M70 58v4M21 72h7M41 72h12M11 70v32M11 135v17M7 152h7M159 45l6 3-6 0 8 4 3-4M33 155l3 5 1-5 1 6M35 42l-24 36M50 125l9-4"/>
<path class="c" d="M164 40v-5H55M164 52v5H55M22 70V147M49 70V147" style="stroke-width:2.600"/>
<path d="M21 144h6v5h-6zM44 144h6v5h-6zM159 35h5v6h-5zM159 52h5v6h-5z" fill="#0ff"/>
<text class="n" x="60" y="27">2#</text><text x="112" y="29">Ls2</text>
<text x="26" y="45" style="font-size:11px">植筋</text><text x="26" y="59" style="font-size:11px">深度</text>
<text class="n" transform="rotate(-90 74 54)" x="74" y="54">b2</text><text x="28" y="76">b1</text>
<text class="r" transform="rotate(-90 15 130)" x="15" y="130">Ls1</text><text class="n" x="55" y="123">1#</text>
<text class="h" x="96" y="115">植筋</text><text class="m" x="93" y="145">L-5形</text>
</svg>
<!-- L-6 -->
<svg class="th" style="left:838px;top:518px" width="175" height="175" viewBox="0 0 175 175">
<path class="w" d="M84 20v10M168 20v10M84 25h84M21 32H168M21 32V155M55 81V155M21 81H84M84 20V87M75 61H168M168 23v49M33 43H63M33 43V87H84M9 86h8M13 86v16M13 135v17M9 152h7M162 45l4 3-4 1 5 3M30 155l3 5 1-5 1 6M84 40l5 5M103 62l8 12M55 125h6"/>
<path class="c" d="M166 40v-5H26V148M166 52v4H56M50 65V148" style="stroke-width:2.600"/>
<path d="M24 144h6v5h-6zM47 144h6v5h-6zM48 63h5v6h-5zM161 35h5v6h-5zM161 52h5v6h-5z" fill="#0ff"/>
<text x="113" y="20">Ls2</text>
<text class="n" transform="rotate(-90 72 54)" x="72" y="54">b2</text><text class="n" x="89" y="52">3#</text><text class="n" x="118" y="83">2#</text><text x="29" y="80">b1</text>
<text class="r" transform="rotate(-90 18 130)" x="18" y="130">Ls1</text><text class="n" x="61" y="132">1#</text>
<text class="h" x="81" y="110">预留钢筋</text><text class="m" x="95" y="145">L-6形</text>
</svg>
<!-- L-7 -->
<svg class="th" style="left:456px;top:709px" width="175" height="175" viewBox="0 0 175 175">
<path class="w" d="M106 21v9M167 21v9M106 25h21M150 25h17M23 32H169M23 32V155M106 21V106M57 106H106M57 62V155M57 62H169M169 24v48M14 155h50M78 32v7M78 52v10M23 68h10M45 68h12M15 106v17M10 106h10M15 142v9M10 151h10M163 42l4 3-4 1 5 3M36 155l3 5 1-5 1 6M84 35l5 8M117 68l-4 6M57 128h6"/>
<path class="c" d="M167 40v-5H27V147M167 52v5H63V99M96 72H52V147" style="stroke-width:2.600"/>
<path d="M25 144h5v5h-5zM50 144h5v5h-5zM60 96h5v5h-5zM94 70h4v5h-4zM162 35h5v6h-5zM162 52h5v6h-5z" fill="#0ff"/>
<text x="127" y="22">Ls2</text>
<text class="n" transform="rotate(-90 83 55)" x="83" y="55">b2</text><text class="n" x="90" y="52">3#</text><text class="n" x="112" y="83">2#</text><text x="33" y="72">b1</text>
<text class="r" transform="rotate(-90 19 140)" x="19" y="140">Ls1</text><text class="n" x="62" y="133">1#</text>
<text class="s" x="90" y="128">预留钢筋</text><text class="m" x="101" y="151" style="font-size:16px">L-7形</text>
</svg>
<!-- L-8 -->
<svg class="th" style="left:647px;top:709px" width="175" height="175" viewBox="0 0 175 175">
<path class="w" d="M75 29H24V73H162M75 29V166M40 73V159M75 36h29M127 36h29M156 31v9M75 43H162M162 34v48M30 166h51M90 43v8M90 71v2M31 73v26M31 130v28M27 158h8M40 85h7M63 85h12M157 52l5 4-5 1 6 3M52 166l3 5 1-5 1 6M93 47l5 6M108 70l5-8M42 132l30 4"/>
<path class="c" d="M29 44a2 2 0 0 0 0 3H158a2 2 0 0 0 0-3M29 66a2 2 0 0 0 0 3H158a2 2 0 0 0 0-3M42 39V159M70 39V159M42 39h4M70 39h-4M42 159h4M70 159h-4"/>
<text x="104" y="38">Ls2</text>
<text class="n" transform="rotate(-90 94 70)" x="94" y="70">b2</text><text class="n" x="108" y="62">2#</text><text x="49" y="87">b1</text>
<text class="r" transform="rotate(-90 35 130)" x="35" y="130">Ls1</text><text class="n" x="78" y="143">1#</text>
<text class="s" x="92" y="104">预留钢筋</text><text class="m" x="102" y="128" style="font-size:16px">L-8形</text>
</svg>

<!-- large preview -->
<svg style="left:1029px;top:318px;background:#000" width="586" height="578" viewBox="0 0 586 578">
<g fill="none" stroke="#d8d8d8" stroke-width="1">
<path d="M106 40v30M255 40v30M503 40v30M106 53.500h31M223 53.500h32M255 53.500h57M426 53.500h77"/>
<path d="M106 97H547M106 230H547M106 97V538M255 97V538M547 68V260M81 538H282"/>
<path d="M547 132L574 140L522 154L547 163M160 538L169 519L177 555L184 540M344 194L382 245M215 444L282 413"/>
<path d="M28 97h43M28 232h43M28 483h43M41 97v27M41 207v25M41 232v70M41 415v68"/>
</g>
<path d="M106 53.500l13-4v8zM223 53.500l13-4v8zM255 53.500l13-4v8zM503 53.500l-13-4v8zM255 53.500l-13-4v8z M41 97l-4 13h8zM41 232l-4-13h8zM41 232l-4 13h8zM41 483l-4-13h8z" fill="#fff"/>
<g fill="none" stroke="#0ff" stroke-width="6"><path d="M135 123.500H501V207.500H138"/><path d="M125 134V484H231V134"/></g>
<g stroke="#000" stroke-width=".7" paint-order="normal">
<text x="141" y="73" font-size="53" fill="#0f0" style="font-family:'Liberation Serif'">240</text>
<text x="319" y="73" font-size="53" fill="#0f0" style="font-family:'Liberation Serif'">1000</text>
<text transform="rotate(-90 61 204)" x="61" y="204" font-size="53" fill="#0f0" style="font-family:'Liberation Serif'">240</text>
<text transform="rotate(-90 61 410)" x="61" y="410" font-size="53" fill="#f00" style="font-family:'Liberation Serif'">1000</text>
<text x="384" y="290" font-size="52" fill="#fff" style="font-family:'Liberation Serif'">2#</text>
<text x="290" y="424" font-size="52" fill="#fff" style="font-family:'Liberation Serif'">1#</text>
<text transform="translate(321,535) scale(.78,1)" font-size="80" fill="#fff" style="font-family:'Liberation Serif'">L</text>
<rect x="363" y="506" width="35" height="2.500" fill="#fff" stroke="none"/>
<text transform="translate(406,535) scale(.85,1)" font-size="80" fill="#fff" style="font-family:'Liberation Serif'">1</text>
<text x="445" y="535" font-size="76" fill="#fff" style="font-family:'Noto Serif CJK SC',serif">形</text>
</g></svg>

<div class="b" style="left:1407px;top:903px;width:101px;height:33px;background:#2f86e4;border-radius:4px"></div>
<span class="t" style="left:1442px;top:919px;color:#fff;font-size:14.500px">确定</span>
<div class="b" style="left:1515px;top:903px;width:100px;height:33px;background:#fff;border:1px solid #dcdcdc;border-radius:4px;box-sizing:border-box"></div>
<span class="t" style="left:1550px;top:919px;font-size:14.500px">取消</span>
<svg style="left:1615px;top:936px" width="14" height="12"><path d="M9 2h2v2H9zM5 6h2v2H5zM9 6h2v2H9zM1 9h2v2H1zM5 9h2v2H5zM9 9h2v2H9z" fill="#888"/></svg>

<!-- red ellipses -->
<svg style="left:0;top:0" width="1659" height="1011"><ellipse cx="1323" cy="78" rx="64" ry="30" fill="none" stroke="#ef1414" stroke-width="3"/><ellipse cx="85" cy="523" rx="58" ry="29" fill="none" stroke="#ef1414" stroke-width="3.500"/></svg>
</div></body></html>
